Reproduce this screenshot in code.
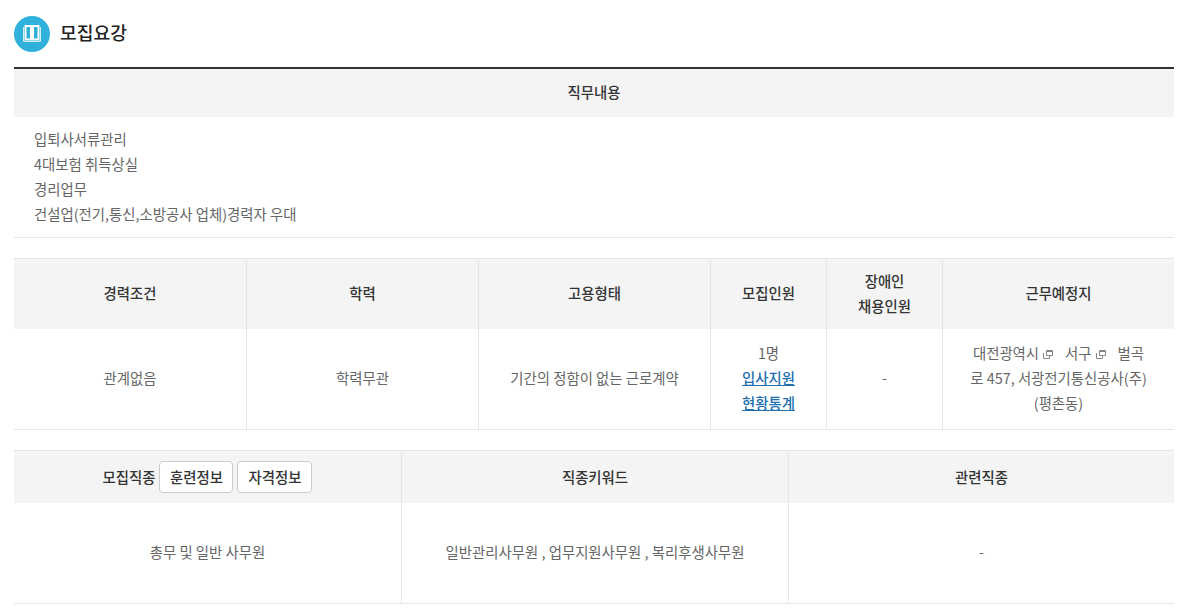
<div class="page">
  <header class="head">
    <span class="badge">
      <svg width="18" height="18" viewBox="0 0 18 18" aria-hidden="true">
        <path d="M.5 2v14.500h17V2" fill="none" stroke="#d4eef8" stroke-width="1"/>
        <rect x="2.500" y="1" width="5.500" height="13.500" fill="#2fb1db" stroke="#fff" stroke-width="2"/>
        <rect x="10" y="1" width="5.500" height="13.500" fill="#2fb1db" stroke="#fff" stroke-width="2"/>
      </svg>
    </span>
    <h2>모집요강</h2>
  </header>

  <section class="job">
    <div class="th job-th">직무내용</div>
    <div class="job-body">
      <p>입퇴사서류관리</p>
      <p>4대보험 취득상실</p>
      <p>경리업무</p>
      <p>건설업(전기,통신,소방공사 업체)경력자 우대</p>
    </div>
  </section>

  <section class="t2">
    <div class="th c">경력조건</div>
    <div class="th c">학력</div>
    <div class="th c">고용형태</div>
    <div class="th c">모집인원</div>
    <div class="th c two"><div>장애인<br />채용인원</div></div>
    <div class="th c">근무예정지</div>
    <div class="td c">관계없음</div>
    <div class="td c">학력무관</div>
    <div class="td c">기간의 정함이 없는 근로계약</div>
    <div class="td c">
      <div>1명<br /><a href="#a">입사지원<br />현황통계</a></div>
    </div>
    <div class="td c">-</div>
    <div class="td c">
      <div>대전광역시<svg class="ext" width="10" height="9" viewBox="0 0 10 9" aria-hidden="true"><path d="M3.500.5h6v5h-6zM3.500 1.500h6" fill="none" stroke="#888"/><path d="M.5 3v5.500h6V6" fill="none" stroke="#888"/></svg>서구<svg class="ext" width="10" height="9" viewBox="0 0 10 9" aria-hidden="true"><path d="M3.500.5h6v5h-6zM3.500 1.500h6" fill="none" stroke="#888"/><path d="M.5 3v5.500h6V6" fill="none" stroke="#888"/></svg>벌곡<br />로 457, 서광전기통신공사(주)<br />(평촌동)</div>
    </div>
  </section>

  <section class="t3">
    <div class="th c">
      <span class="lbl">모집직종</span>
      <button type="button">훈련정보</button>
      <button type="button">자격정보</button>
    </div>
    <div class="th c">직종키워드</div>
    <div class="th c">관련직종</div>
    <div class="td c">총무 및 일반 사무원</div>
    <div class="td c">일반관리사무원 , 업무지원사무원 , 복리후생사무원</div>
    <div class="td c">-</div>
  </section>
</div>

<style>
  :global(body) {
    margin: 0;
    background: #fff;
    font-family: "Noto Sans CJK KR", "Noto Sans", sans-serif;
  }
  .page {
    padding: 16px 10px 0 14px;
    color: #666;
    font-size: 14.4px;
    line-height: 25px;
  }
  .head {
    display: flex;
    align-items: center;
    gap: 10px;
    height: 36px;
  }
  .badge {
    width: 36px;
    height: 36px;
    border-radius: 50%;
    background: #2fb1db;
    display: flex;
    align-items: center;
    justify-content: center;
  }
  h2 {
    margin: 0;
    padding-bottom: 4px;
    font-size: 18.2px;
    font-weight: 500;
    color: #222;
  }
  .job {
    margin-top: 15px;
    border-top: 2px solid #333;
    border-bottom: 1px solid #e6e6e6;
  }
  .th {
    background: #f4f4f4;
    color: #333;
    font-weight: 500;
  }
  .job-th {
    height: 48px;
    padding-bottom: 4px;
    box-sizing: border-box;
    display: flex;
    align-items: center;
    justify-content: center;
  }
  .job-body {
    padding: 9px 20px 11px;
  }
  p { margin: 0; }
  .t2, .t3 {
    display: grid;
    margin-top: 20px;
    border-top: 1px solid #e6e6e6;
    border-bottom: 1px solid #e6e6e6;
  }
  .t2 { grid-template-columns: 232px 232px 232px 116px 116px 232px; }
  .t3 { grid-template-columns: 387px 387px 386px; }
  .c {
    display: flex;
    align-items: center;
    justify-content: center;
    text-align: center;
    border-left: 1px solid #e6e6e6;
    box-sizing: border-box;
    padding-bottom: 4px;
  }
  .t2 > :nth-child(6n+1), .t3 > :nth-child(3n+1) { border-left: 0; }
  .t2 .th { height: 70px; }
  .t2 .two { padding-bottom: 2px; }
  .t2 .td { height: 100px; }
  .t3 .th { height: 52px; padding-bottom: 2px; }
  .t3 .td { height: 100px; }
  a {
    color: #1d6fb0;
    font-weight: 500;
    text-decoration: underline;
  }
  .ext { margin: 0 12px 0 4px; }
  .lbl { margin-right: 4px; }
  button {
    height: 32px;
    width: 74px;
    padding: 0 0 2px;
    margin: 0 4px -2px 0;
    border: 1px solid #ccc;
    border-radius: 4px;
    background: #fff;
    color: #333;
    font: inherit;
    font-weight: 500;
  }
  button:last-child { margin-right: 0; width: 75px; }
</style>
